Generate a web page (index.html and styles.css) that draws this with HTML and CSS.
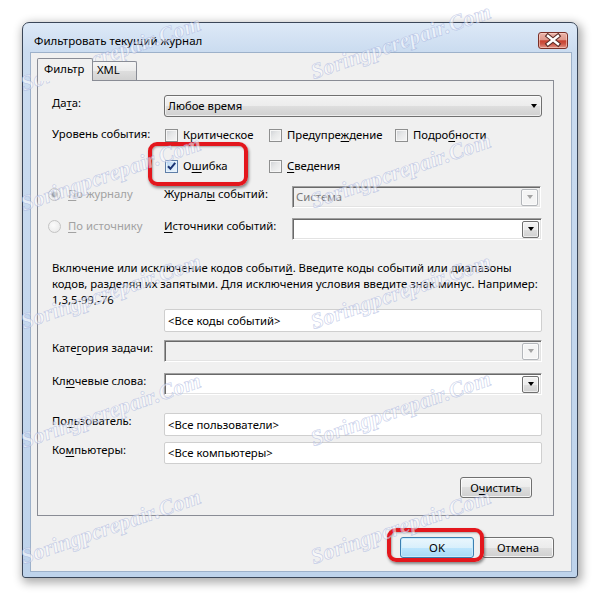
FILE: index.html
```html
<!DOCTYPE html>
<html lang="ru">
<head>
<meta charset="utf-8">
<title>Фильтровать текущий журнал</title>
<link rel="stylesheet" href="styles.css">
</head>
<body>
<div class="stage">
  <div class="window">
    <div class="titlebar">
      <span class="title">Фильтровать текущий журнал</span>
      <div class="close-btn">
        <svg width="28" height="15" viewBox="0 0 28 15">
          <path d="M9 3 L19 11 M19 3 L9 11" stroke="#5a2b26" stroke-width="4.6" stroke-linecap="square" fill="none"/>
          <path d="M9 3 L19 11 M19 3 L9 11" stroke="#ffffff" stroke-width="2.4" stroke-linecap="square" fill="none"/>
        </svg>
      </div>
    </div>
    <div class="client">
      <div class="tabs">
        <div class="tab active">Фильтр</div>
        <div class="tab xml">XML</div>
      </div>
      <div class="panel">
        <div class="row r-date">
          <div class="lbl">Да<u>т</u>а:</div>
          <div class="combo list"><span class="val">Любое время</span><span class="arrow"></span></div>
        </div>
        <div class="row r-levels">
          <div class="lbl">Уровень события:</div>
          <div class="checks">
            <div class="chk"><span class="cb"></span><span>Критическое</span></div>
            <div class="chk"><span class="cb"></span><span>Предупре<u>ж</u>дение</span></div>
            <div class="chk"><span class="cb"></span><span>Подро<u>б</u>ности</span></div>
            <div class="chk"><span class="cb checked"><svg width="11" height="11" viewBox="0 0 11 11"><path d="M2 5.2 L4.4 7.8 L9.2 1.8" stroke="#1c3574" stroke-width="2" fill="none"/></svg></span><span>О<u>ш</u>ибка</span></div>
            <div class="chk"><span class="cb"></span><span><u>С</u>ведения</span></div>
          </div>
        </div>
        <div class="row r-src r-log">
          <div class="radio-opt"><span class="rb on"></span><span><u>П</u>о журналу</span></div>
          <div class="lbl2">Журнал<u>ы</u> событий:</div>
          <div class="combo sunken disabled"><span class="val">Система</span><span class="ddbtn"><span class="arrow"></span></span></div>
        </div>
        <div class="row r-src r-srcs">
          <div class="radio-opt"><span class="rb"></span><span><u>П</u>о источнику</span></div>
          <div class="lbl2"><u>И</u>сточники событий:</div>
          <div class="combo sunken"><span class="val"></span><span class="ddbtn"><span class="arrow"></span></span></div>
        </div>
        <p class="hint">Включение или исключение кодов событи<u>й</u>. Введите коды событий или диапазоны<br>кодов, разделяя их запятыми. Для исключения условия введите знак минус. Например:<br>1,3,5-99,-76</p>
        <div class="row r-codes">
          <div class="lbl"></div>
          <div class="input">&lt;Все коды событий&gt;</div>
        </div>
        <div class="row r-cat">
          <div class="lbl">Кате<u>г</u>ория задачи:</div>
          <div class="combo sunken disabled"><span class="val"></span><span class="ddbtn"><span class="arrow"></span></span></div>
        </div>
        <div class="row r-kw">
          <div class="lbl">Кл<u>ю</u>чевые слова:</div>
          <div class="combo sunken"><span class="val"></span><span class="ddbtn"><span class="arrow"></span></span></div>
        </div>
        <div class="row r-user">
          <div class="lbl">По<u>л</u>ьзователь:</div>
          <div class="input">&lt;Все пользователи&gt;</div>
        </div>
        <div class="row r-comp">
          <div class="lbl">Ко<u>м</u>пьютеры:</div>
          <div class="input">&lt;Все компьютеры&gt;</div>
        </div>
        <div class="row r-clear">
          <button class="btn btn-clear">О<u>ч</u>истить</button>
        </div>
      </div>
      <div class="footer">
        <button class="btn ok">OK</button>
        <button class="btn cancel">Отмена</button>
      </div>
    </div>
  </div>

  <div class="hl hl-1"></div>
  <div class="hl hl-2"></div>

  <div class="wm w1">Soringpcrepair.Com</div>
  <div class="wm w2">Soringpcrepair.Com</div>
  <div class="wm w3">Soringpcrepair.Com</div>
  <div class="wm w4">Soringpcrepair.Com</div>
  <div class="wm w5">Soringpcrepair.Com</div>
  <div class="wm w6">Soringpcrepair.Com</div>
  <div class="wm w7">Soringpcrepair.Com</div>
  <div class="wm w8">Soringpcrepair.Com</div>
  <div class="wm w9">Soringpcrepair.Com</div>
  <div class="wm w10">Soringpcrepair.Com</div>
</div>
</body>
</html>
```
FILE: styles.css
```css
* { box-sizing: border-box; }
html, body { margin: 0; padding: 0; background: #ffffff; }
body {
  font-family: "Noto Sans", "Open Sans", "DejaVu Sans", sans-serif;
  font-size: 11.3px;
  color: #000;
}
u { text-decoration: underline; text-underline-offset: 2px; }

.stage {
  position: relative;
  width: 601px;
  height: 601px;
  padding: 22px;
  overflow: hidden;
}

.window {
  width: 556px;
  height: 556px;
  border: 1px solid #3a4658;
  border-radius: 7px 7px 3px 3px;
  background: linear-gradient(180deg, #dde9f7 0px, #cbdcf0 28px, #bed3eb 100%);
  padding: 0 5px 5px 7px;
  display: flex;
  flex-direction: column;
  box-shadow: 2px 3px 10px 2px rgba(0, 0, 0, 0.32);
}

.titlebar {
  height: 29px;
  flex: none;
  display: flex;
  justify-content: space-between;
  padding-left: 4px;
}
.title { margin-top: 10px; line-height: 15px; font-size: 11.5px; }
.close-btn {
  margin-top: 9px;
  margin-right: 4px;
  width: 30px;
  height: 17px;
  border: 1px solid #7a2f27;
  border-radius: 3px;
  background: linear-gradient(180deg, #eab4aa 0%, #e0988c 45%, #c8402f 52%, #cd5545 72%, #e09488 100%);
  box-shadow: inset 0 0 0 1px rgba(255, 220, 210, 0.55);
  display: flex;
  align-items: center;
  justify-content: center;
}

.client {
  flex: 1;
  background: #f0f0f0;
  border: 1px solid #9db1ca;
  padding: 5px 17px 0 6px;
  display: flex;
  flex-direction: column;
}

.tabs {
  display: flex;
  align-items: flex-end;
  height: 22px;
  flex: none;
  position: relative;
  z-index: 1;
}
.tab {
  height: 19px;
  border: 1px solid #898c95;
  border-bottom: none;
  border-radius: 2px 2px 0 0;
  background: linear-gradient(180deg, #f5f5f5, #ebebeb 50%, #dedede 50%, #d2d2d2);
  line-height: 16px;
}
.tab.active {
  width: 56px;
  height: 23px;
  margin-bottom: -1px;
  background: #f0f0f0;
  padding: 2px 0 0 6px;
  position: relative;
  z-index: 2;
}
.tab.xml {
  width: 45px;
  margin-left: -1px;
  padding-left: 4px;
}

.panel {
  height: 436px;
  flex: none;
  border: 1px solid #898c95;
  background: #f0f0f0;
  padding: 14px 11px 0 14px;
  display: flex;
  flex-direction: column;
}

.row { display: flex; align-items: flex-start; flex: none; }
.lbl { width: 112px; flex: none; line-height: 16px; }
.lbl2 { width: 128px; flex: none; line-height: 16px; }
.val { line-height: 16px; white-space: nowrap; }

.r-date { height: 22px; }
.r-levels { margin-top: 9px; }
.r-src { height: 22px; }
.r-log { margin-top: 12px; }
.r-srcs { margin-top: 10px; }
.r-codes { height: 23px; margin-top: 1px; }
.r-cat { height: 22px; margin-top: 8px; }
.r-kw { height: 22px; margin-top: 11px; }
.r-user { height: 23px; margin-top: 18px; }
.r-comp { height: 22px; margin-top: 6px; }
.r-clear { height: 21px; margin-top: 13px; justify-content: flex-end; padding-right: 10px; }

.combo {
  flex: 1;
  height: 100%;
  display: flex;
  align-items: center;
}
.combo.list {
  border: 1px solid #707070;
  border-radius: 3px;
  background: linear-gradient(180deg, #f3f3f3, #ececec 50%, #dedede 50%, #d0d0d0);
  box-shadow: inset 0 0 0 1px rgba(255, 255, 255, 0.6);
  padding-left: 3px;
}
.combo.list .arrow { margin-left: auto; margin-right: 4px; }
.arrow {
  width: 0;
  height: 0;
  border-left: 3.5px solid transparent;
  border-right: 3.5px solid transparent;
  border-top: 4px solid #000;
}
.combo.sunken {
  border: 1px solid;
  border-color: #a0a0a0 #ffffff #ffffff #a0a0a0;
  box-shadow: inset 1px 1px 0 #696969, inset -1px -1px 0 #e3e3e3;
  background: #ffffff;
  padding: 0 2px 0 3px;
}
.r-log .combo { margin-right: 1px; }
.combo.disabled { background: #f0f0f0; color: #7a7a7a; }
.ddbtn {
  margin-left: auto;
  width: 17px;
  height: 17px;
  border: 1px solid #707070;
  border-radius: 2px;
  background: linear-gradient(180deg, #f3f3f3, #ececec 50%, #dedede 50%, #d0d0d0);
  box-shadow: inset 0 0 0 1px rgba(255, 255, 255, 0.6);
  display: flex;
  align-items: center;
  justify-content: center;
}
.combo.disabled .ddbtn { border-color: #b3b6ba; background: #f4f4f4; }
.combo.disabled .arrow { border-top-color: #a3a3a3; }

.checks {
  display: grid;
  grid-template-columns: 104px 126px auto;
  row-gap: 15px;
  margin-top: 1px;
  margin-left: 1px;
}
.chk { display: flex; align-items: center; gap: 5px; line-height: 16px; white-space: nowrap; }
.cb {
  width: 13px;
  height: 13px;
  flex: none;
  border: 1px solid #8e8f8f;
  background: linear-gradient(135deg, #cdd0d4 0%, #e6e7e8 45%, #f6f6f6 100%);
  box-shadow: inset 0 0 0 1px #f6f6f6;
  display: flex;
  align-items: center;
  justify-content: center;
}
.cb.checked {
  border-color: #5f7fa8;
  background: linear-gradient(135deg, #b7d5f2 0%, #d5e8f9 50%, #eef6fd 100%);
  box-shadow: inset 0 0 0 1px #e9f3fc;
}

.radio-opt {
  width: 116px;
  flex: none;
  margin-left: -4px;
  display: flex;
  align-items: center;
  gap: 7px;
  line-height: 16px;
  color: #a2a2a2;
  white-space: nowrap;
}
.rb {
  width: 13px;
  height: 13px;
  flex: none;
  border: 1px solid #c4c4c4;
  border-radius: 50%;
  background: radial-gradient(circle at 40% 40%, #fbfbfb, #e6e6e6);
  display: flex;
  align-items: center;
  justify-content: center;
}
.rb.on::after {
  content: "";
  width: 5px;
  height: 5px;
  border-radius: 50%;
  background: radial-gradient(circle at 40% 40%, #b8b8b8, #6f6f6f);
  box-shadow: 0 0 0 1px #d2d2d2;
}

.hint { margin: 20px 0 0; line-height: 16px; white-space: nowrap; }

.input {
  flex: 1;
  height: 100%;
  border: 1px solid #cfcfcf;
  border-radius: 2px;
  background: #ffffff;
  display: flex;
  align-items: center;
  padding-left: 3px;
  line-height: 16px;
  white-space: nowrap;
}

.btn {
  font: inherit;
  color: #000;
  height: 21px;
  padding: 0;
  border: 1px solid #707070;
  border-radius: 3px;
  background: linear-gradient(180deg, #f3f3f3, #ececec 50%, #dedede 50%, #d0d0d0);
  box-shadow: inset 0 0 0 1px rgba(255, 255, 255, 0.75);
  line-height: 16px;
}
.btn-clear { width: 72px; }

.footer {
  display: flex;
  justify-content: flex-end;
  gap: 8px;
  margin-top: 21px;
  flex: none;
}
.btn.ok {
  width: 74px;
  border-color: #3c7fb1;
  background: linear-gradient(180deg, #eaf6fd, #d9f0fc 50%, #bee6fd 50%, #a7d9f5);
  box-shadow: inset 0 0 0 1px #c6ebfc;
}
.btn.cancel { width: 72px; }

.hl {
  position: absolute;
  border: 4px solid #e3171d;
  border-radius: 9px;
  box-shadow: 1px 2px 3px rgba(0, 0, 0, 0.45), inset 1px 1px 2px rgba(0, 0, 0, 0.3);
}
.hl-1 { left: 148px; top: 142px; width: 100px; height: 44px; }
.hl-2 { left: 387px; top: 528px; width: 97px; height: 34px; }

.wm {
  position: absolute;
  font-family: "Liberation Serif", "DejaVu Serif", serif;
  font-style: italic;
  font-weight: bold;
  font-size: 22px;
  line-height: 22px;
  color: rgba(255, 255, 255, 0.55);
  -webkit-text-stroke: 0.7px rgba(140, 156, 212, 0.45);
  transform-origin: 0 100%;
  transform: rotate(-19deg);
  white-space: nowrap;
  pointer-events: none;
  letter-spacing: 0.3px;
}
.w1 { left: 25px; top: 73px; }
.w2 { left: 315px; top: 61px; }
.w3 { left: 25px; top: 193px; }
.w4 { left: 315px; top: 190px; }
.w5 { left: 25px; top: 311px; }
.w6 { left: 315px; top: 311px; }
.w7 { left: 25px; top: 430px; }
.w8 { left: 315px; top: 428px; }
.w9 { left: 25px; top: 546px; }
.w10 { left: 315px; top: 546px; }
```
